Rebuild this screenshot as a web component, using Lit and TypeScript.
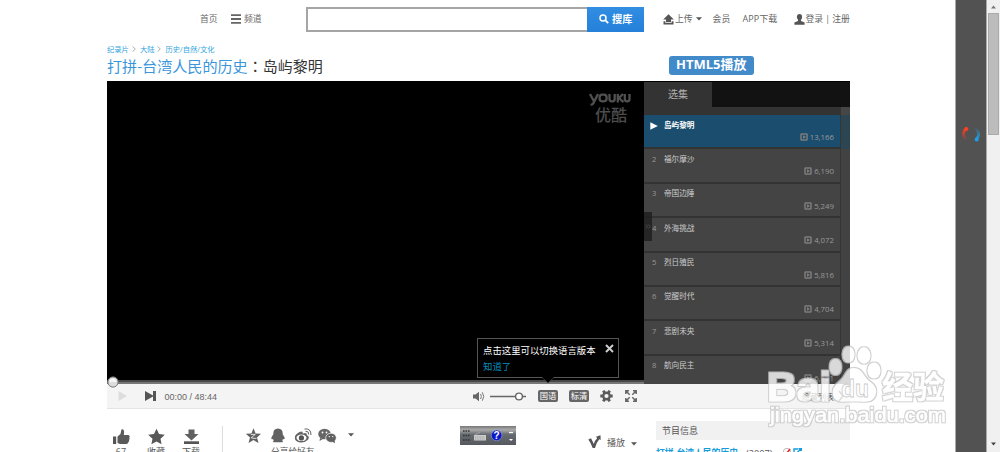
import { LitElement, html, css, svg } from "lit";
import { customElement } from "lit/decorators.js";

const EPISODES = [
  ["岛屿黎明", "13,166"], ["福尔摩沙", "6,190"], ["帝国边陲", "5,249"], ["外海挑战", "4,072"],
  ["烈日殖民", "5,816"], ["觉醒时代", "4,704"], ["悲剧未央", "5,314"], ["航向民主", "6,121"],
];

const icon = (cls: string, w: number, h: number, body: unknown) =>
  html`<svg class=${cls} width=${w} height=${h} viewBox="0 0 ${w} ${h}">${body}</svg>`;

const caret = (cls: string) => icon(cls, 6, 4, svg`<path d="M0 0.3H6L3 3.5Z" fill="#555"/>`);

@customElement("episode-list")
class EpisodeList extends LitElement {
  static styles = css`
    :host { display: flex; flex-direction: column; width: 206px; height: 302px; background: #333; overflow: hidden; position: relative; }
    svg { display: block; flex: none; }
    .tabs { height: 24.5px; flex: none; display: flex; background: #121212; }
    .tab { width: 68px; background: #333; color: #b0b0b0; font-size: 10px; line-height: 24px; text-align: center; }
    .body { flex: 1; display: flex; min-height: 0; }
    .rows { width: 196px; flex: none; padding-top: 8.5px; overflow: hidden; box-sizing: border-box; }
    .row { height: 34.4px; box-sizing: border-box; border-bottom: 2px solid #333; background: #444; overflow: hidden; }
    .row.on { background: #1b4e6e; }
    .top { display: flex; height: 11px; line-height: 11px; padding-top: 4.5px; font-size: 7.6px; }
    .num { width: 12px; padding-left: 8px; color: #999; flex: none; height: 11px; }
    .name { color: #ccc; }
    .on .name { color: #fff; font-weight: bold; }
    .on .num { width: 14px; padding: 2px 0 0 6px; }
    .count { display: flex; justify-content: flex-end; align-items: center; height: 11px; padding: 1px 6px 0 0; color: #999; font-size: 7.8px; }
    .count svg { margin-right: 2px; }
    .track { width: 9px; border-left: 1px solid #353535; background: #424242; }
    .thumbtop { height: 8px; background: #464646; }
    .hl { height: 34px; background: #2c4553; }
    .fold { position: absolute; left: 0; top: 130px; width: 8px; height: 29px; background: rgba(32, 32, 32, .85); display: flex; align-items: center; justify-content: center; }
  `;
  render() {
    return html`
      <div class="tabs"><div class="tab">选集</div></div>
      <div class="body">
        <div class="rows">
          ${EPISODES.map(([name, n], i) => html`
            <div class="row ${i === 0 ? "on" : ""}">
              <div class="top">
                <span class="num">${i === 0 ? icon("", 8, 8, svg`<path d="M0.3 0.2L7.8 4L0.3 7.8Z" fill="#fff"/>`) : i + 1}</span>
                <span class="name">${name}</span>
              </div>
              <div class="count">
                ${icon("", 8, 8, svg`<rect x="1" y="1" width="6" height="6" rx=".6" fill="none" stroke="#7c7c7c" stroke-width="1.5"/><path d="M3 2.2L6 4L3 5.8Z" fill="#808080"/>`)}
                <span>${n}</span>
              </div>
            </div>`)}
        </div>
        <div class="track"><div class="thumbtop"></div><div class="hl"></div></div>
      </div>
      <div class="fold">${icon("", 6, 5, svg`<path d="M.8 .5L2.6 2.5L.8 4.5M3.4 .5L5.2 2.5L3.4 4.5" fill="none" stroke="#555" stroke-width=".8"/>`)}</div>`;
  }
}

@customElement("app-root")
class AppRoot extends LitElement {
  static styles = css`
    :host { display: flex; position: relative; width: 1000px; height: 452px; overflow: hidden; background: #fff;
      font-family: "Open Sans", "Noto Sans CJK SC", sans-serif; font-size: 9px; color: #555; white-space: nowrap; }
    svg { display: block; flex: none; }
    .page { width: 955px; height: 452px; flex: none; overflow: hidden; }
    .main { width: 743px; margin-left: 107px; }
    .header { display: flex; align-items: center; height: 26px; padding-top: 6px; color: #666; font-size: 8.8px; line-height: 26px; }
    .home { width: 31px; margin-left: 93px; flex: none; }
    .menu { margin-right: 3px; }
    .chan { width: 62px; flex: none; }
    .box { width: 279px; height: 21px; border: 2px solid #a5a5a5; border-right: 0; flex: none; }
    .go { width: 57px; height: 25px; background: linear-gradient(#318ee2, #2480d9); display: flex; align-items: center; color: #fff; font-weight: bold; font-size: 10.2px; flex: none; }
    .mag { margin: 0 3px 0 12px; }
    .up { margin: 0 1px 0 19px; }
    .uc { margin: 0 11px 0 3px; }
    .vip { width: 30px; flex: none; }
    .app { width: 51px; flex: none; font-size: 9px; }
    .usr { margin-right: 1px; }
    .login { word-spacing: 0.1px; letter-spacing: -0.1px; }
    .crumb { display: flex; margin-top: 12px; height: 10px; line-height: 10px; font-size: 7.3px; color: #32a5e0; }
    .arrow { margin: 2px 4px 0 3px; }
    .titles { display: flex; height: 27px; }
    .title { width: 561.5px; line-height: 24px; font-size: 15px; color: #333; flex: none; }
    .blue { color: #3a96dc; font-size: 15.1px; }
    .colon { font-family: "Noto Sans CJK TC", sans-serif; }
    .html5 { margin-top: 2px; width: 85.5px; height: 19px; border-radius: 3px; background: #428bca; color: #fff; font-weight: bold; font-size: 13px; line-height: 17.5px; text-align: center; }
    .player { display: flex; width: 743px; height: 303px; background: #000; }
    .video { width: 537px; height: 303px; position: relative; display: flex; flex-direction: column; justify-content: space-between; align-items: flex-end; }
    .logo { margin: 10px 13px 0 0; width: 42px; color: #555; text-align: right; }
    .cn { font-size: 16px; font-weight: 500; line-height: 18px; margin: -2px 4px 0 0; color: #4c4c4c; }
    .side { padding-top: 1px; }
    .seek { width: 537px; height: 4px; background: linear-gradient(#484848 0 2px, #777 2px); }
    .knob { position: absolute; left: 0; top: 295px; }
    .tip { position: absolute; left: 370px; top: 257px; width: 142px; height: 40px; box-sizing: border-box; border: 1px solid #555; background: #000; color: #fff; font-size: 9.4px; line-height: 16px; padding: 3.5px 9px 0 5px; display: flex; justify-content: space-between; z-index: 1; }
    .know { color: #078ebb; }
    .close { margin-top: 1px; margin-right: -5px; }
    .beak { position: absolute; left: 64px; top: 38px; }
    .ctl { display: flex; align-items: center; height: 24px; background: #f4f4f4; border-bottom: 1px solid #e4e4e4; }
    .play { margin: 0 17px 0 11px; }
    .time { width: 308.5px; margin-left: 8.5px; font-family: "Liberation Sans", sans-serif; font-size: 9px; line-height: 12px; padding-top: 1px; color: #666; flex: none; }
    .slider { margin: 0 12px 0 5px; }
    .tag { width: 20px; height: 12.5px; background: #666; border-radius: 2px; color: #fff; font-size: 8.3px; line-height: 12px; text-align: center; flex: none; margin-right: 11px; }
    .full { margin-left: 12px; }
    .list { margin-left: 165px; width: 36px; font-size: 8px; color: #444; flex: none; }
    .bottom { display: flex; align-items: flex-start; }
    .act { width: 35px; margin-top: 18.5px; flex: none; }
    .acts { display: flex; width: 115px; flex: none; }
    .lab { line-height: 12px; margin-top: 1.5px; width: 28px; text-align: center; }
    .act svg { margin-left: 5.5px; }
    .vr { width: 1px; height: 30px; margin-top: 17px; background: #ddd; flex: none; }
    .share { width: 130px; margin-left: 22px; margin-top: 19px; flex: none; }
    .icons { display: flex; height: 16px; }
    .sc { margin: 5px 0 0 11px; }
    .slab { margin-left: 26px; line-height: 12px; margin-top: 2px; font-size: 8.7px; }
    .ime { margin: 17px 0 0 85px; }
    .voff { margin: 26px 0 0 72px; }
    .bo { margin: 27px 0 0 6px; line-height: 14px; width: 24px; flex: none; }
    .bc { margin-top: 33px; }
    .info { margin: 12px 0 0 19px; width: 194px; flex: none; }
    .ih { height: 19px; line-height: 20px; background: #f1f1f1; padding-left: 6px; color: #555; }
    .it { display: flex; margin-top: 7px; line-height: 13px; font-size: 8.8px; }
    .name { color: #159dde; font-weight: bold; width: 90px; flex: none; }
    .year { width: 37px; font-size: 9.2px; }
    .rail { width: 30px; height: 452px; background: #525252; border-left: 1px solid #aaa; border-right: 1px solid #aaa; flex: none; display: flex; justify-content: center; align-items: flex-start; }
    .spin { margin-top: 125px; }
    .bar { width: 13px; height: 452px; background: #f0f0f0; display: flex; flex-direction: column; align-items: center; }
    .au { margin-top: 5px; }
    .thumb { width: 11px; height: 122px; margin-top: 4px; background: #bcbcbc; box-sizing: border-box; border: 1px solid #aaa; }
    .ad { margin-top: 307px; }
    .wm { position: absolute; left: 760px; top: 340px; z-index: 5; }
  `;

  render() {
    return html`
      <div class="page"><div class="main">
        <div class="header">
          <span class="home">首页</span>
          ${icon("menu", 10, 10, svg`<path d="M0 1.2H10M0 5H10M0 8.8H10" stroke="#666" stroke-width="1.8"/>`)}
          <span class="chan">频道</span>
          <div class="box"></div>
          <div class="go">
            ${icon("mag", 10, 10, svg`<circle cx="4" cy="4" r="3" fill="none" stroke="#fff" stroke-width="1.5"/><path d="M6.2 6.2L9.2 9.2" stroke="#fff" stroke-width="1.8"/>`)}
            <span>搜库</span>
          </div>
          ${icon("up", 11, 11, svg`<path d="M5.5 0.3L10.8 5.6H8V8.2H3V5.6H0.2Z" fill="#555"/><path d="M0.5 7.2V10.5H10.5V7.2H8.6V8.9H2.4V7.2Z" fill="#555"/>`)}
          <span>上传</span>${caret("uc")}
          <span class="vip">会员</span><span class="app">APP下载</span>
          ${icon("usr", 11, 11, svg`<ellipse cx="5.5" cy="3" rx="2.6" ry="3" fill="#555"/><path d="M4 5H7V7L10.6 8.4V10.7H0.4V8.4L4 7Z" fill="#555"/>`)}
          <span class="login">登录 | 注册</span>
        </div>
        <div class="crumb">
          <span>纪录片</span>${this.arrow()}<span>大陆</span>${this.arrow()}<span>历史/自然/文化</span>
        </div>
        <div class="titles">
          <div class="title"><span class="blue">打拼-台湾人民的历史</span><span class="colon">：</span>岛屿黎明</div>
          <div class="html5">HTML5播放</div>
        </div>
        <div class="player">
          <div class="video">
            <div class="logo">
              ${icon("", 42, 17, svg`<g fill="none" stroke="#505050" stroke-width="2.3"><path d="M1 3L4.8 10M9 3L4.5 12Q3.6 14 1.5 13.6"/><rect x="10.6" y="3.7" width="7" height="6.6" rx="2.7"/><path d="M20.5 3V8Q20.5 10.3 22.6 10.3H23.6Q25.7 10.3 25.7 8V3M28.8 3V11.4M34 3L30 7L34.4 11.2M35.8 3V8Q35.8 10.3 37.8 10.3H38.4Q40.5 10.3 40.5 8V3"/></g>`)}
              <div class="cn">优酷</div>
            </div>
            <div class="seek"></div>
            <div class="tip">
              <div><div>点击这里可以切换语言版本</div><div class="know">知道了</div></div>
              ${icon("close", 9, 9, svg`<path d="M1 1L8 8M8 1L1 8" stroke="#ccc" stroke-width="2"/>`)}
              ${icon("beak", 12, 7, svg`<path d="M0 0L6 6L12 0Z" fill="#000"/><path d="M0 .4L6 6L12 .4" fill="none" stroke="#444" stroke-width=".7"/>`)}
            </div>
            ${icon("knob", 12, 12, svg`<circle cx="6" cy="6" r="5.1" fill="#ddd" stroke="#777"/><path d="M2.5 6A3.5 3.5 0 0 1 9.5 6Z" fill="#f5f5f5"/>`)}
          </div>
          <div class="side"><episode-list></episode-list></div>
        </div>
        <div class="ctl">
          ${icon("play", 10, 10, svg`<path d="M0.5 0L9 5L0.5 10Z" fill="#ddd"/>`)}
          ${icon("", 11, 10, svg`<path d="M0 0L8 4.4V0H11V10H8V5.6L0 10Z" fill="#555"/>`)}
          <span class="time">00:00 / 48:44</span>
          ${icon("", 12, 11, svg`<path d="M0 3.5H2.5L6 .8V10.2L2.5 7.5H0Z" fill="#666"/><path d="M7.6 3Q9.2 5.5 7.6 8M9.3 1.3Q12.2 5.5 9.3 9.7" stroke="#777" fill="none"/>`)}
          ${icon("slider", 36, 9, svg`<path d="M0 4.5H36" stroke="#666" stroke-width="1.6"/><circle cx="29" cy="4.5" r="3.4" fill="#fff" stroke="#666" stroke-width="1.4"/>`)}
          <span class="tag">国语</span><span class="tag">标清</span>
          ${icon("", 13, 12, svg`<circle cx="6.5" cy="6" r="3.3" fill="none" stroke="#5a5a5a" stroke-width="2.4"/><g stroke="#5a5a5a" stroke-width="2.8"><path d="M0.3 6H2.5M10.5 6H12.7M3.4 .7L4.5 2.8M9.6 .7L8.5 2.8M3.4 11.3L4.5 9.2M9.6 11.3L8.5 9.2"/></g>`)}
          ${icon("full", 12, 12, svg`<path d="M.8 4V.8H4M8 .8H11.2V4M11.2 8V11.2H8M4 11.2H.8V8M1 1L4.7 4.7M11 1L7.3 4.7M11 11L7.3 7.3M1 11L4.7 7.3" fill="none" stroke="#666" stroke-width="1.5"/>`)}
          <span class="list">隐藏列表</span>
          ${icon("", 6, 12, svg`<path d="M1 1L5 6L1 11" fill="none" stroke="#555" stroke-width="1.5"/>`)}
        </div>
        <div class="bottom">
          <div class="acts">
            <div class="act">${icon("", 17, 17, svg`<path d="M0 8.5H3.2V16H0Z" fill="#555"/><path d="M4.5 8.5L7.5 6L8.4 1.5Q11.5 .5 11 5.5L10.8 7H15.5Q17.4 8 16.3 9.7Q17 11 16 12Q16.5 13.5 15.3 14.2Q15 16 13.5 16H7L4.5 15Z" fill="#5a5a5a"/>`)}<div class="lab">67</div></div>
            <div class="act">${icon("", 17, 17, svg`<path d="M8.5 .8L11 6L16.8 6.7L12.5 10.7L13.6 16.3L8.5 13.5L3.4 16.3L4.5 10.7L.2 6.7L6 6Z" fill="#585858"/>`)}<div class="lab">收藏</div></div>
            <div class="act">${icon("", 17, 17, svg`<path d="M5.5 1.5H11.5V6H15.5L8.5 12.6L1.5 6H5.5Z" fill="#606060"/><path d="M1 13.3H16V16H1Z" fill="#555"/>`)}<div class="lab">下载</div></div>
          </div>
          <div class="vr"></div>
          <div class="share">
            <div class="icons">
              ${icon("", 92, 16, svg`
                <path d="M8.5 .3L10.6 5.4L16 5.8L12 9.5L13.5 15L8.5 12.1L3.5 15L5 9.5L.8 5.8L6.4 5.4Z" fill="#606060"/><path d="M5.8 6.4H10.3L6.2 9.8Q9 10.8 11.5 10.2" stroke="#fff" stroke-width=".8" fill="none"/>
                <path d="M33 .6Q38 .8 37.7 6.2L39.7 9.7Q39.8 12 38 11L37.3 12.4Q39 14.3 36 14.3H30Q27 14.3 28.7 12.4L28 11Q26.2 12 26.3 9.7L28.3 6.2Q28 .8 33 .6Z" fill="#626262"/>
                <path d="M50 8Q52.5 4 56.5 3.4Q58 3.4 57.8 5.5Q62 4 62 7.2Q65 8.5 63 11.8Q60 15 55 14.5Q49 13.8 50 8Z" fill="#666"/><ellipse cx="56.5" cy="9.8" rx="5" ry="3.3" fill="#fff"/><circle cx="56.4" cy="9.9" r="2.6" fill="#555"/><path d="M59.5 1Q66 0 66 7M60.5 3.3Q64 3 63.8 6.5" fill="none" stroke="#666"/>
                <ellipse cx="79.5" cy="6" rx="6.3" ry="5.3" fill="#666"/><path d="M75 10L74.5 13L78 11Z" fill="#666"/><ellipse cx="86" cy="9.8" rx="5.3" ry="4.6" fill="#606060" stroke="#fff" stroke-width=".7"/><path d="M87 13.5L90 15.2L89.5 12Z" fill="#606060"/><g fill="#fff"><circle cx="77.5" cy="4.5" r=".9"/><circle cx="81.5" cy="4.5" r=".9"/><circle cx="84.3" cy="8.6" r=".7"/><circle cx="87.7" cy="8.6" r=".7"/></g>`)}
              ${caret("sc")}
            </div>
            <div class="slab">分享给好友</div>
          </div>
          ${icon("ime", 56, 19, svg`
            <defs><linearGradient id="g" x2="0" y2="1"><stop offset="0" stop-color="#777"/><stop offset=".2" stop-color="#aaa"/><stop offset=".45" stop-color="#666b70"/><stop offset="1" stop-color="#55595e"/></linearGradient></defs>
            <rect width="56" height="19" fill="url(#g)"/>
            <path d="M3 5H10M3 9.5H10M3 14H10" stroke="#333" stroke-width="1.4" stroke-dasharray="1.6 .9"/>
            <rect x="14" y="9" width="12" height="5.5" fill="#ccc"/><path d="M15 11H25M15 13H25" stroke="#888" stroke-width=".7" stroke-dasharray="1 .7"/><path d="M14.5 9L20 6.5" stroke="#aaa" stroke-width=".8"/>
            <circle cx="36.6" cy="9.4" r="5.3" fill="#0b18c9" stroke="#9aabd8" stroke-width=".6"/><text x="36.6" y="13" text-anchor="middle" font-family="Liberation Sans" font-weight="bold" font-size="10" fill="#fff">?</text>
            <path d="M49 6.5H53" stroke="#fff" stroke-width="1.3"/><path d="M49 13H53L51 15Z" fill="#fff"/>`)}
          ${icon("voff", 13, 14, svg`<path d="M.3 4.5L3 3.3Q4.5 6 5.8 9Q7 5 9.2 3.2L8 1.8L12.5 .3L12.7 5L11.3 4.3Q8 8 7 13H4.7Q3 8 .3 4.5Z" fill="#555"/>`)}
          <span class="bo">播放</span>${caret("bc")}
          <div class="info">
            <div class="ih">节目信息</div>
            <div class="it"><span class="name">打拼-台湾人民的历史</span><span class="year">(2007)</span>
              ${icon("", 20, 9, svg`<circle cx="4" cy="5" r="3.7" fill="none" stroke="#bbb"/><path d="M4 6L7 2" stroke="#e22" stroke-width="1.6"/><path d="M15 2H11V8H17V6M14.5 5L18 2M15.5 1.7H18.3V4" fill="none" stroke="#159dde" stroke-width="1.4"/>`)}
            </div>
          </div>
        </div>
      </div></div>
      <div class="rail">
        ${icon("spin", 20, 18, svg`<defs><linearGradient id="r" x2="0" y2="1"><stop offset="0" stop-color="#ff3b1f"/><stop offset="1" stop-color="#ff3b1f" stop-opacity=".05"/></linearGradient><linearGradient id="b" x2="0" y2="1"><stop offset="0" stop-color="#1ba0e6" stop-opacity=".05"/><stop offset="1" stop-color="#1ba0e6"/></linearGradient></defs>
          <path d="M5.5 3.5Q-.5 8.5 5 15" stroke="url(#r)" stroke-width="3" fill="none"/><circle cx="5.3" cy="4" r="2" fill="#fa4222"/>
          <path d="M14.5 3Q20.5 9.5 15 14.5" stroke="url(#b)" stroke-width="3" fill="none"/><circle cx="15.7" cy="14.6" r="2" fill="#1ba0e6"/>`)}
      </div>
      <div class="bar">
        ${icon("au", 5, 4, svg`<path d="M0 3.5L2.5 .5L5 3.5Z" fill="#777"/>`)}
        <div class="thumb"></div>
        ${icon("ad", 5, 4, svg`<path d="M0 .5L2.5 3.5L5 .5Z" fill="#444"/>`)}
      </div>
      ${icon("wm", 195, 95, svg`
        <defs><filter id="edge" x="-5%" y="-10%" width="110%" height="120%">
          <feMorphology in="SourceAlpha" operator="dilate" radius="1.1" result="fat"/>
          <feGaussianBlur in="fat" stdDeviation=".5" result="soft"/>
          <feFlood flood-color="#c4c4c4"/><feComposite in2="soft" operator="in" result="rim"/>
          <feMerge><feMergeNode in="rim"/><feMergeNode in="SourceGraphic"/></feMerge>
        </filter></defs>
        <g opacity=".8" filter="url(#edge)" fill="#fff">
          <ellipse cx="75.5" cy="27" rx="6" ry="8"/><ellipse cx="88.5" cy="14.5" rx="6" ry="8"/><ellipse cx="104" cy="15.5" rx="6.5" ry="8.3"/><ellipse cx="114" cy="30.5" rx="6.5" ry="8"/>
          <path fill-rule="evenodd" d="M94 28Q100 28 104 35Q107 40 113 44Q119 51 114 58Q110 63 100 61.5H86Q76 63 73 56Q71 48 79 42Q83 39 86 33Q89 28 94 28Z"/>
          <g font-family="Liberation Sans, sans-serif" font-weight="bold" stroke="#fff" stroke-width="1">
            <text x="7" y="61" font-size="41" textLength="64" lengthAdjust="spacingAndGlyphs">Bai</text>
            <text x="122" y="58" font-size="31" stroke-width=".3" textLength="62" lengthAdjust="spacingAndGlyphs" font-family="Noto Sans CJK SC">经验</text>
            <text x="10" y="82" font-size="20.5" font-weight="normal" stroke-width=".5" textLength="176" lengthAdjust="spacingAndGlyphs">jingyan.baidu.com</text>
          </g>
        </g>
        <text x="81" y="57" font-size="24" font-family="Liberation Sans" font-weight="bold" fill="#fff" stroke="#ccc" stroke-width=".8" textLength="28" lengthAdjust="spacingAndGlyphs">du</text>`)}
    `;
  }

  private arrow() {
    return icon("arrow", 4, 6, svg`<path d="M.5 .4L3.3 3L.5 5.6" fill="none" stroke="#999" stroke-width=".8"/>`);
  }
}
